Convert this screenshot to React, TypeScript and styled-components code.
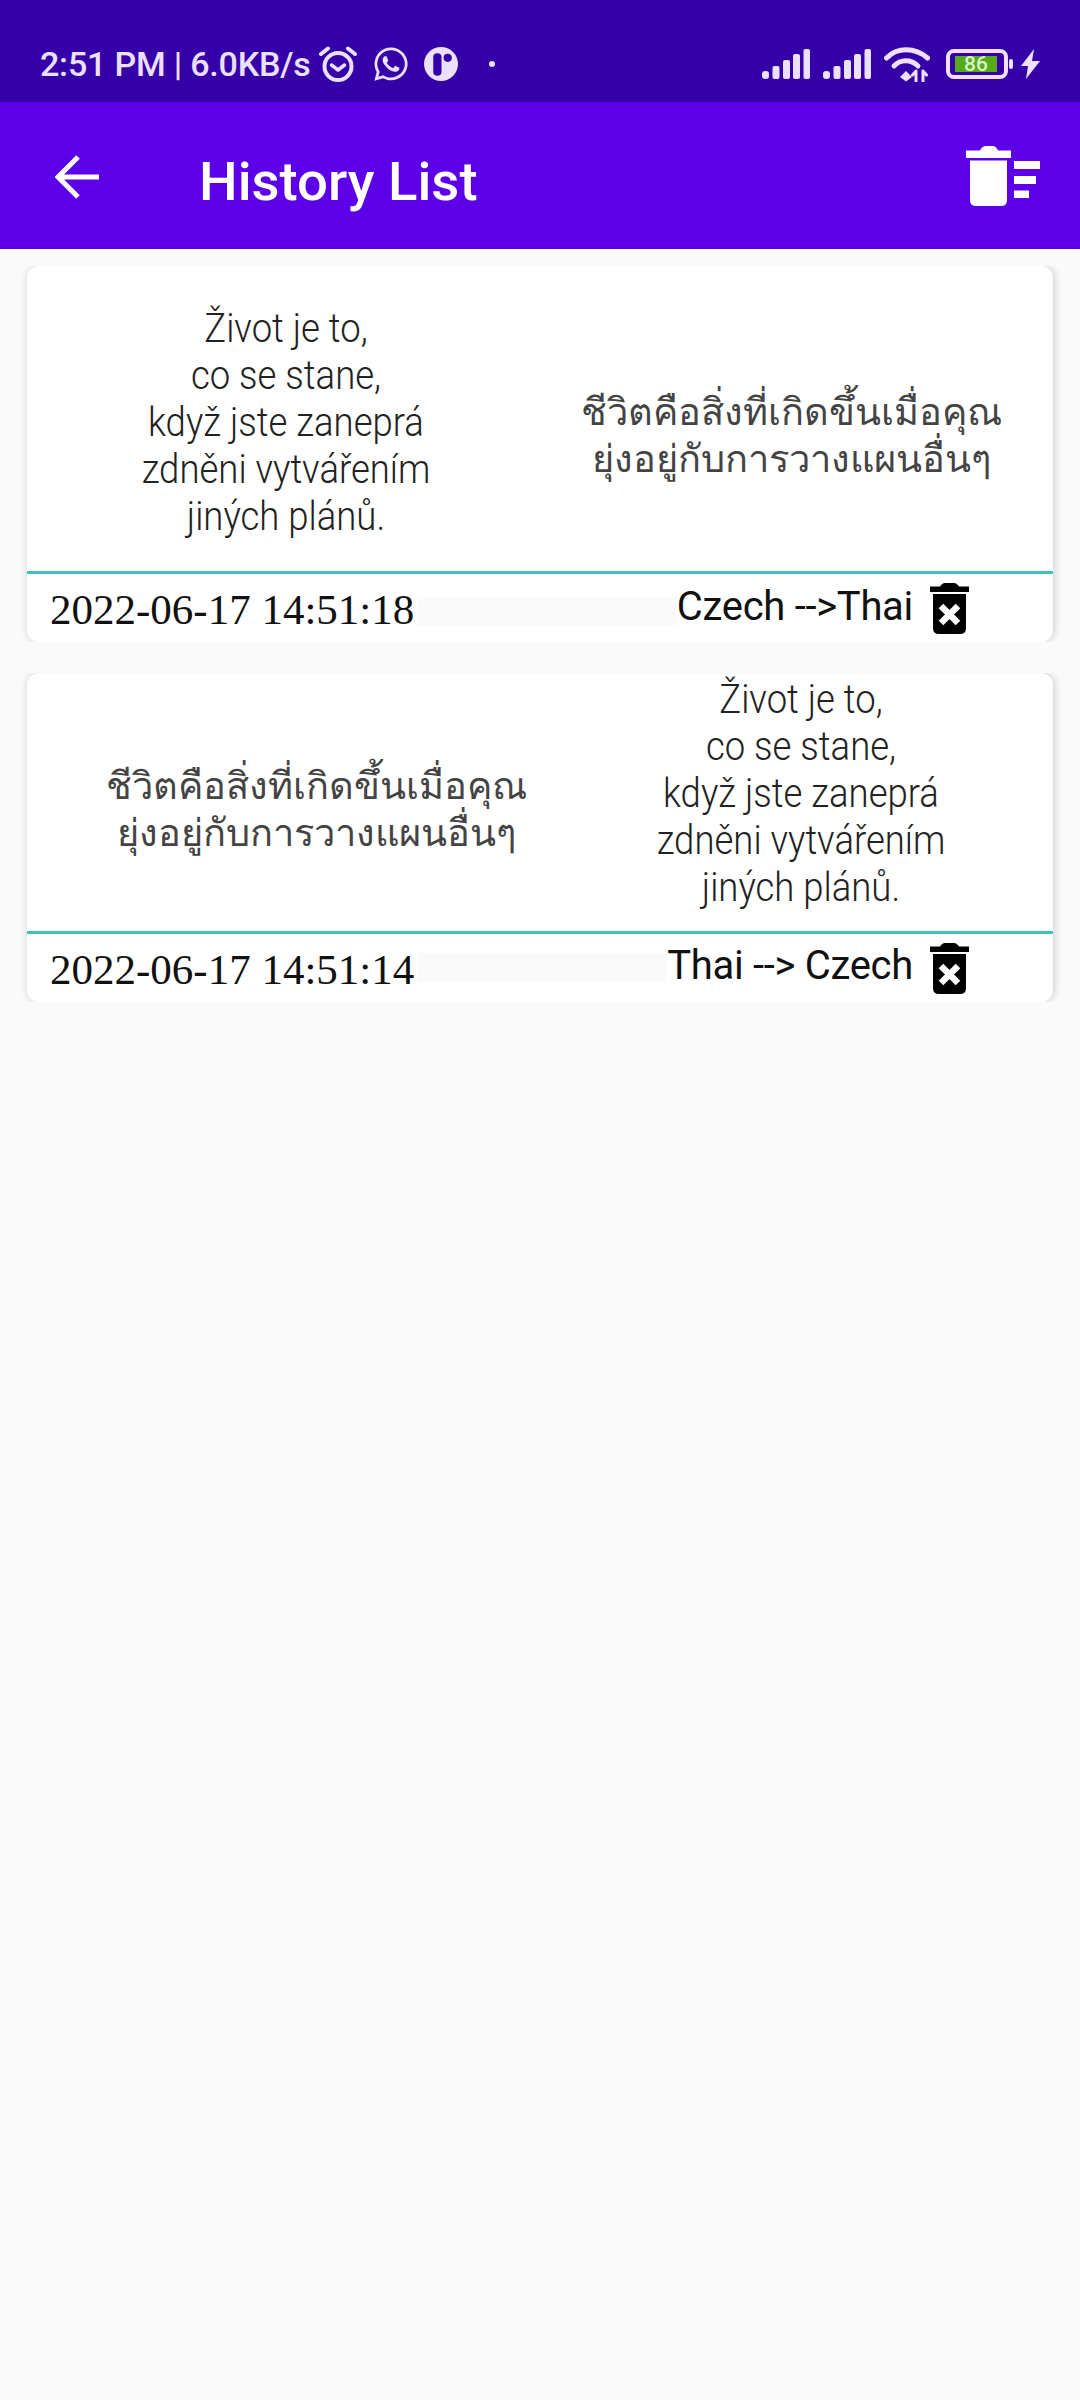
import React from 'react';
import styled, { createGlobalStyle } from 'styled-components';
import { FaWhatsapp } from 'react-icons/fa';

const GlobalStyle = createGlobalStyle`
  html, body {
    margin: 0;
    padding: 0;
    background: #fafafa;
  }
  * {
    box-sizing: border-box;
  }
`;

const Page = styled.div`
  width: 1080px;
  height: 2400px;
  background: #fafafa;
  font-family: Roboto, 'Noto Sans', sans-serif;
  overflow: hidden;
`;

const StatusBar = styled.div`
  height: 102px;
  background: #3500a8;
  color: #ece0ff;
  display: flex;
  align-items: center;
  justify-content: space-between;
  padding: 26px 40px 0 40px;
`;

const StatusGroup = styled.div`
  display: flex;
  align-items: center;
`;

const StatusText = styled.span`
  font-size: 34px;
  font-weight: 500;
  letter-spacing: -0.2px;
  margin-right: 7px;
`;

const StatusIcon = styled.svg<{ $right?: number }>`
  display: block;
  flex: none;
  margin-right: ${(p) => p.$right ?? 0}px;
`;

const WhatsApp = styled(FaWhatsapp)`
  display: block;
  flex: none;
  margin-right: 14px;
`;

const Dot = styled.div`
  width: 6px;
  height: 6px;
  border-radius: 50%;
  background: #ece0ff;
  margin-left: 31px;
`;

const Battery = styled.div`
  width: 62px;
  height: 30px;
  border: 4px solid #f0e0ff;
  border-radius: 8px;
  display: flex;
  align-items: center;
  padding: 0 3px;
  position: relative;
  margin-right: 13px;
  &::after {
    content: '';
    position: absolute;
    right: -9px;
    top: 6px;
    width: 4px;
    height: 10px;
    border-radius: 2px;
    background: #f0e0ff;
  }
`;

const BatteryFill = styled.div`
  width: 42px;
  height: 16px;
  background: #56ab1c;
  color: #d9f7c6;
  font-size: 21px;
  line-height: 16px;
  text-align: center;
  font-weight: 500;
  margin-left: 2px;
`;

const AppBar = styled.div`
  height: 147px;
  background: #5c00e8;
  color: #fff;
  display: flex;
  align-items: center;
  padding: 0 39px 0 55px;
`;

const BackIcon = styled.svg`
  display: block;
  flex: none;
  margin: 3px 100px 0 0;
`;

const Title = styled.h1`
  margin: 11px 0 0;
  flex: 1;
  font-size: 54.5px;
  font-weight: 500;
  letter-spacing: 0;
`;

const List = styled.div`
  padding-top: 17px;
  display: flex;
  flex-direction: column;
  gap: 31px;
`;

const Item = styled.div`
  padding: 0 27px;
  overflow: hidden;
`;

const Card = styled.div`
  background: #fff;
  border-radius: 12px;
  box-shadow: 1px 0 8px rgba(0, 0, 0, 0.2);
`;

const CardBody = styled.div<{ $height: number; $columns: string }>`
  height: ${(p) => p.$height}px;
  display: grid;
  grid-template-columns: ${(p) => p.$columns};
  align-items: center;
  border-bottom: 3px solid #3ec4b6;
`;

const Sentence = styled.div<{ $offset: number }>`
  text-align: center;
  font-size: 41px;
  line-height: 47px;
  font-weight: 300;
  color: #222;
  white-space: pre-line;
  margin-top: ${(p) => p.$offset * 2}px;
  transform: scaleX(0.89);
`;

const ThaiSentence = styled.div<{ $offset: number }>`
  text-align: center;
  font-size: 38px;
  line-height: 47px;
  font-weight: 300;
  color: #444;
  white-space: pre-line;
  margin-top: ${(p) => p.$offset * 2}px;
`;

const CardFooter = styled.div`
  height: 68px;
  display: flex;
  align-items: center;
  padding: 0 84px 0 23px;
`;

const DateText = styled.span`
  font-family: 'Liberation Serif', serif;
  font-size: 43px;
  color: #111;
  margin-top: 2px;
`;

const FooterBand = styled.div<{ $lift: number }>`
  flex: 1;
  height: 29px;
  margin: ${(p) => 6 - p.$lift * 2}px 0 0 4px;
  background: #fafafa;
`;

const LangText = styled.span<{ $lift: number }>`
  font-size: 40px;
  font-weight: 400;
  letter-spacing: -0.3px;
  color: #111;
  margin: 0 17px ${(p) => 4 + p.$lift * 2}px 0;
  white-space: pre;
`;

const AlarmIcon = () => (
  <StatusIcon $right={14} width="40" height="36" viewBox="0 0 40 36" fill="none" stroke="#ece0ff" strokeLinecap="round">
    <circle cx="20" cy="20.5" r="13.5" strokeWidth="4" />
    <path d="M13.5 19l6.5 5 6.5-5" strokeWidth="3.5" strokeLinejoin="round" />
    <path d="M3 8l7-5.5M37 8l-7-5.5" strokeWidth="4" />
  </StatusIcon>
);

const NoteIcon = () => (
  <StatusIcon width="34" height="34" viewBox="0 0 33 33">
    <circle cx="16.5" cy="16.5" r="16.5" fill="#ece0ff" />
    <rect x="9" y="6" width="8" height="22" rx="4" fill="#3500a8" />
    <circle cx="23" cy="10.5" r="4" fill="#3500a8" />
  </StatusIcon>
);

const SignalIcon = ({ right }: { right: number }) => (
  <StatusIcon $right={right} width="48" height="30" viewBox="0 0 48 30" fill="#ece0ff">
    <rect x="0" y="22" width="7" height="8" rx="3" />
    <rect x="10.5" y="17" width="7" height="13" rx="2" />
    <rect x="21" y="11" width="7" height="19" rx="2" />
    <rect x="31" y="5" width="7" height="25" rx="2" />
    <rect x="41.5" y="0" width="6.5" height="30" rx="2" />
  </StatusIcon>
);

const WifiIcon = () => (
  <StatusIcon $right={16} width="46" height="36" viewBox="0 0 46 36" fill="none" stroke="#f0e0ff" strokeLinecap="round">
    <path d="M2.5 12C13 1 31 1 43.5 12" strokeWidth="5" />
    <path d="M10 20C16.5 13 27 13 34 20" strokeWidth="5" />
    <path d="M16 31l6-6 6 6-6 4.5z" fill="#f0e0ff" stroke="none" />
    <path d="M32 25v10M28.5 29l3.5-4M39 25v10M39 25l3.5 4" strokeWidth="3" />
  </StatusIcon>
);

const BoltIcon = () => (
  <StatusIcon width="19" height="30" viewBox="0 0 19 30" fill="#f0e0ff">
    <path d="M13 0L0 17h7L5 30l14-18h-8z" />
  </StatusIcon>
);

const ClearAllIcon = () => (
  <svg width="75" height="60" viewBox="0 0 75 60" fill="#fff">
    <path d="M14 4.5Q16 0 20 0H27Q30 0 32 4.5H45V12H0V4.5Z" />
    <path d="M4 14.5H41V54Q41 60 35 60H10Q4 60 4 54Z" />
    <rect x="48" y="15" width="26" height="8" />
    <rect x="48" y="30" width="22" height="8" />
    <rect x="48" y="44.5" width="15" height="7.5" />
  </svg>
);

const DeleteIcon = () => (
  <svg width="39" height="51" viewBox="0 0 39 51" fill="#000">
    <path d="M10 3.5Q12 0 15 0H24Q27 0 29 3.5H39V9H0V3.5Z" />
    <path d="M3 11H36V45Q36 51 30 51H9Q3 51 3 45Z" />
    <path d="M11 23L28 40M28 23L11 40" stroke="#fff" strokeWidth="6.5" strokeLinecap="butt" />
  </svg>
);

const czech = 'Život je to,\nco se stane,\nkdyž jste zaneprá\nzdněni vytvářením\njiných plánů.';
const thai = 'ชีวิตคือสิ่งที่เกิดขึ้นเมื่อคุณ\nยุ่งอยู่กับการวางแผนอื่นๆ';

const App: React.FC = () => {
  return (
    <Page>
      <GlobalStyle />
      <StatusBar>
        <StatusGroup>
          <StatusText>2:51 PM | 6.0KB/s</StatusText>
          <AlarmIcon />
          <WhatsApp size={38} color="#ece0ff" />
          <NoteIcon />
          <Dot />
        </StatusGroup>
        <StatusGroup>
          <SignalIcon right={13} />
          <SignalIcon right={13} />
          <WifiIcon />
          <Battery>
            <BatteryFill>86</BatteryFill>
          </Battery>
          <BoltIcon />
        </StatusGroup>
      </StatusBar>
      <AppBar>
        <BackIcon width="44" height="44" viewBox="0 0 44 44" fill="none" stroke="#fff" strokeWidth="5">
          <path d="M44 22H4M23 2L3 22l20 20" />
        </BackIcon>
        <Title>History List</Title>
        <ClearAllIcon />
      </AppBar>
      <List>
        <Item>
          <Card>
            <CardBody $height={308} $columns="518px 492px">
              <Sentence $offset={4}>{czech}</Sentence>
              <ThaiSentence $offset={17}>{thai}</ThaiSentence>
            </CardBody>
            <CardFooter>
              <DateText>2022-06-17 14:51:18</DateText>
              <FooterBand $lift={0} />
              <LangText $lift={0}>Czech --&gt;Thai</LangText>
              <DeleteIcon />
            </CardFooter>
          </Card>
        </Item>
        <Item>
          <Card>
            <CardBody $height={261} $columns="578px 392px">
              <ThaiSentence $offset={8}>{thai}</ThaiSentence>
              <Sentence $offset={-9}>{czech}</Sentence>
            </CardBody>
            <CardFooter>
              <DateText>2022-06-17 14:51:14</DateText>
              <FooterBand $lift={4} />
              <LangText $lift={1}>Thai --&gt; Czech</LangText>
              <DeleteIcon />
            </CardFooter>
          </Card>
        </Item>
      </List>
    </Page>
  );
};

export default App;
